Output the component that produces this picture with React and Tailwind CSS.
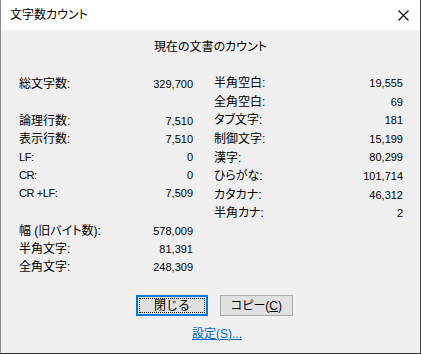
import React from "react";

const FONT = {
  fontFamily: '"Liberation Sans", "Noto Sans CJK JP", sans-serif',
};

const leftRows = [
  ["総文字数:", "329,700"],
  null,
  ["論理行数:", "7,510"],
  ["表示行数:", "7,510"],
  ["LF:", "0", true],
  ["CR:", "0", true],
  ["CR +LF:", "7,509", true],
  null,
  ["幅 (旧バイト数):", "578,009"],
  ["半角文字:", "81,391"],
  ["全角文字:", "248,309"],
];

const rightRows = [
  ["半角空白:", "19,555"],
  ["全角空白:", "69"],
  ["タブ文字:", "181"],
  ["制御文字:", "15,199"],
  ["漢字:", "80,299"],
  ["ひらがな:", "101,714"],
  ["カタカナ:", "46,312"],
  ["半角カナ:", "2"],
];

function Row({ label, value, tall, latin }) {
  return (
    <div
      className={
        "flex items-center justify-between " + (tall ? "h-[18.6px]" : "h-[18px]")
      }
    >
      <span
        className={
          latin
            ? "text-[11px] tracking-[-0.4px]"
            : "text-[12px] [font-feature-settings:'palt']"
        }
      >
        {label}
      </span>
      <span className="text-[11px]">{value}</span>
    </div>
  );
}

export default function App() {
  return (
    <div
      className="w-[421px] h-[354px] bg-[#f0f0f0] border-l border-r border-b border-l-[#8a8a8a] border-r-[#444] border-b-[#333] flex flex-col text-black overflow-hidden"
      style={FONT}
    >
      {/* title bar */}
      <div className="h-[30px] bg-white flex items-center justify-between pl-[9px] pr-[11px] shrink-0">
        <span className="text-[12px] [font-feature-settings:'palt']">文字数カウント</span>
        <svg width="11" height="11" viewBox="0 0 11 11">
          <path d="M0.5 0.5 L10.5 10.5 M10.5 0.5 L0.5 10.5" stroke="#000" strokeWidth="1.1" />
        </svg>
      </div>

      {/* heading */}
      <div className="pt-[8px] h-[26px] text-center text-[12px] leading-[18px] [font-feature-settings:'palt']">
        現在の文書のカウント
      </div>

      {/* counts */}
      <div className="flex pt-[19px] pl-[18px]">
        <div className="w-[174px]">
          {leftRows.map((r, i) =>
            r ? (
              <Row key={i} label={r[0]} value={r[1]} latin={r[2]} />
            ) : (
              <div key={i} className={i === 1 ? "h-[19px]" : "h-[20px]"} />
            )
          )}
        </div>
        <div className="w-[189px] ml-[21px] -mt-[1px]">
          {rightRows.map((r, i) => (
            <Row key={i} label={r[0]} value={r[1]} tall />
          ))}
        </div>
      </div>

      {/* buttons */}
      <div className="flex gap-[12px] pl-[135px] mt-[19px]">
        <button className="w-[72px] h-[21px] border-2 border-[#0078d7] bg-[#e1e1e1] p-[1px] flex">
          <span className="flex-1 flex items-center justify-center border border-dotted border-black text-[12px]">
            閉じる
          </span>
        </button>
        <button className="w-[73px] h-[21px] border border-[#adadad] bg-[#e1e1e1] flex items-center justify-center text-[12px] [font-feature-settings:'palt']">
          コピー(<span className="underline">C</span>)
        </button>
      </div>

      <div className="pl-[191px] mt-[5px]">
        <span className="text-[12px] text-[#0066cc] underline [font-feature-settings:'palt']">
          設定(S)...
        </span>
      </div>
    </div>
  );
}
